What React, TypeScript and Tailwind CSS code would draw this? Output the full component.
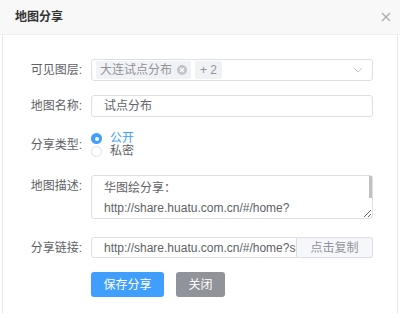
import { useState } from "react";

const font = "font-['Liberation_Sans','Noto_Sans_CJK_SC',sans-serif]";

function Label({ text, className = "" }: { text: string; className?: string }) {
  return (
    <div className={`w-[79px] shrink-0 text-right text-[12px] text-[#606266] ${className}`}>
      {text}
    </div>
  );
}

function App() {
  const [type, setType] = useState("public");
  const desc = "华图绘分享：\nhttp://share.huatu.com.cn/#/home?\nshareId=8f3a1c2d6b";
  const link = "http://share.huatu.com.cn/#/home?shareId=8f3a1c2d6b";

  return (
    <div className={`w-[400px] h-[318px] bg-white flex flex-col ${font}`}>
      <div className="h-[35px] shrink-0 bg-[#f8f8f8] border-b border-[#eeeeee] flex items-center justify-between pl-[15px] pr-[9px]">
        <div className="text-[12px] font-bold text-[#333]">地图分享</div>
        <svg width="10" height="10" viewBox="0 0 10 10" className="text-[#aaa]">
          <path d="M1 1 L9 9 M9 1 L1 9" stroke="currentColor" strokeWidth="1.2" />
        </svg>
      </div>

      <div className="mx-[2px] h-[278px] border-x border-[#e6e6e6] pt-[24px] pr-[24px] flex flex-col">
        {/* 可见图层 */}
        <div className="flex items-center h-[22px]">
          <Label text="可见图层:" />
          <div className="ml-[9px] flex-1 h-[22px] border border-[#dcdfe6] rounded-[3px] flex items-center pl-[4px] pr-[9px]">
            <span className="h-[18px] flex items-center gap-[5px] bg-[#f0f2f5] rounded-[2px] px-[4px] text-[12px] text-[#909399]">
              大连试点分布
              <span className="w-[10px] h-[10px] rounded-full bg-[#c0c4cc] flex items-center justify-center">
                <svg width="6" height="6" viewBox="0 0 6 6">
                  <path d="M1 1 L5 5 M5 1 L1 5" stroke="white" strokeWidth="1.1" />
                </svg>
              </span>
            </span>
            <span className="ml-[4px] h-[18px] flex items-center bg-[#f0f2f5] rounded-[2px] px-[5px] text-[12px] text-[#909399]">
              + 2
            </span>
            <svg width="10" height="6" viewBox="0 0 10 6" className="ml-auto text-[#c0c4cc]">
              <path d="M1 1 L5 5 L9 1" fill="none" stroke="currentColor" strokeWidth="1" />
            </svg>
          </div>
        </div>

        {/* 地图名称 */}
        <div className="flex items-center h-[22px] mt-[14px]">
          <Label text="地图名称:" />
          <div className="ml-[9px] flex-1 h-[22px] border border-[#dcdfe6] rounded-[3px] flex items-center pl-[12px] text-[12px] text-[#606266]">
            试点分布
          </div>
        </div>

        {/* 分享类型 */}
        <div className="flex items-center h-[26px] mt-[15px]">
          <Label text="分享类型:" />
          <div className="ml-[9px] flex flex-col">
            {[
              { k: "public", t: "公开" },
              { k: "private", t: "私密" },
            ].map((o) => (
              <label
                key={o.k}
                className="h-[13px] flex items-center gap-[8px] cursor-pointer"
                onClick={() => setType(o.k)}
              >
                {type === o.k ? (
                  <span className="w-[11px] h-[11px] rounded-full bg-[#409eff] flex items-center justify-center">
                    <span className="w-[4px] h-[4px] rounded-full bg-white" />
                  </span>
                ) : (
                  <span className="w-[11px] h-[11px] rounded-full border border-[#dcdfe6] bg-white" />
                )}
                <span className={`text-[12px] leading-[13px] ${type === o.k ? "text-[#409eff]" : "text-[#606266]"}`}>
                  {o.t}
                </span>
              </label>
            ))}
          </div>
        </div>

        {/* 地图描述 */}
        <div className="flex items-start mt-[17px]">
          <Label text="地图描述:" className="pt-[2px]" />
          <div className="ml-[9px] flex-1 relative">
            <textarea
              readOnly
              value={desc}
              className="block w-full h-[44px] border border-[#dcdfe6] rounded-[3px] pl-[12px] pr-[6px] pt-[2px] text-[12px] leading-[20px] text-[#606266] outline-none resize-y overflow-hidden"
            />
            {/* scrollbar thumb */}
            <div className="absolute right-[1px] top-[1px] w-[3px] h-[22px] bg-[#c1c1c1]" />
          </div>
        </div>

        {/* 分享链接 */}
        <div className="flex items-center h-[21px] mt-[18px]">
          <Label text="分享链接:" />
          <div className="ml-[9px] flex-1 h-[21px] flex">
            <input
              readOnly
              value={link}
              className="w-[206px] h-full border border-[#dcdfe6] rounded-l-[3px] pl-[12px] text-[12px] text-[#606266] outline-none"
            />
            <div className="flex-1 h-full border border-l-0 border-[#dcdfe6] rounded-r-[3px] bg-[#f5f7fa] flex items-center justify-center text-[12px] text-[#909399]">
              点击复制
            </div>
          </div>
        </div>

        {/* buttons */}
        <div className="flex mt-[14px] pl-[88px] gap-[12px]">
          <button className="w-[73px] h-[25px] rounded-[3px] bg-[#409eff] text-white text-[12px]">保存分享</button>
          <button className="w-[49px] h-[25px] rounded-[3px] bg-[#909399] text-white text-[12px]">关闭</button>
        </div>
      </div>
    </div>
  );
}

export default App;
